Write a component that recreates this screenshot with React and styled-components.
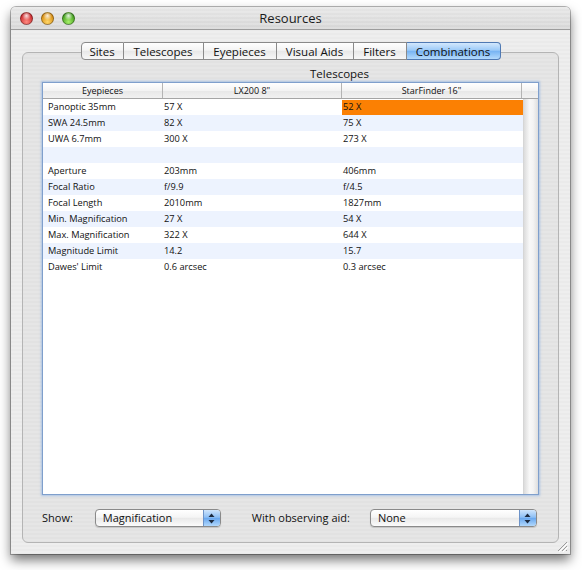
import React from 'react';
import styled, { createGlobalStyle } from 'styled-components';

const GlobalStyle = createGlobalStyle`
  body {
    margin: 0;
    background: #ffffff;
    font-family: "Open Sans", "Liberation Sans", sans-serif;
  }
`;

const Page = styled.div`
  padding: 7px 0 0 11px;
  width: 582px;
  height: 570px;
  box-sizing: border-box;
`;

const Window = styled.div`
  position: relative;
  width: 559px;
  height: 547px;
  display: flex;
  flex-direction: column;
  border-radius: 5px 5px 0 0;
  overflow: hidden;
  box-shadow: 0 0 0 1px rgba(0, 0, 0, 0.28), 0 6px 12px rgba(0, 0, 0, 0.55);
  background: repeating-linear-gradient(to bottom, #eeeeee 0, #eeeeee 2px, #eaeaea 2px, #eaeaea 4px);
`;

const TitleBar = styled.div`
  position: relative;
  height: 22px;
  flex: none;
  display: flex;
  align-items: center;
  padding-left: 9px;
  gap: 8px;
  border-bottom: 1px solid #9c9c9c;
  background:
    repeating-linear-gradient(to bottom, rgba(255, 255, 255, 0.18) 0, rgba(255, 255, 255, 0.18) 2px, transparent 2px, transparent 4px),
    linear-gradient(#e6e6e6, #d6d6d6);
`;

const Light = styled.div`
  width: 13px;
  height: 13px;
  border-radius: 50%;
  box-sizing: border-box;
  border: 1px solid rgba(0, 0, 0, 0.35);
  background:
    radial-gradient(circle at 50% 25%, rgba(255, 255, 255, 0.85) 0, rgba(255, 255, 255, 0) 45%),
    radial-gradient(circle at 50% 80%, ${p => p.$glow} 0, ${p => p.$color} 75%);
`;

const Title = styled.div`
  position: absolute;
  left: 0;
  right: 0;
  top: 0;
  line-height: 22px;
  text-align: center;
  font-size: 13px;
  color: #1a1a1a;
  pointer-events: none;
`;

const Body = styled.div`
  flex: 1;
  display: flex;
  flex-direction: column;
  padding: 12px 11px 11px 11px;
  min-height: 0;
`;

const TabRow = styled.div`
  position: relative;
  z-index: 1;
  display: flex;
  justify-content: center;
  margin-bottom: -8px;
`;

const Tab = styled.div`
  width: ${p => p.$w}px;
  height: 18px;
  box-sizing: border-box;
  display: flex;
  align-items: center;
  justify-content: center;
  font-size: 11.5px;
  color: #111;
  border: 1px solid ${p => (p.$active ? '#4f79b3' : '#8a8a8a')};
  border-left-width: ${p => (p.$first ? '1px' : '0')};
  border-radius: ${p => (p.$first ? '4px 0 0 4px' : p.$last ? '0 4px 4px 0' : '0')};
  background: ${p =>
    p.$active
      ? 'linear-gradient(#d3e8fd 0%, #9ccaf8 45%, #78b4f3 52%, #b4dafc 100%)'
      : 'linear-gradient(#ffffff 0%, #f4f4f4 45%, #e8e8e8 52%, #f7f7f7 100%)'};
`;

const GroupBox = styled.div`
  flex: 1;
  display: flex;
  flex-direction: column;
  border: 1px solid #b4b4b4;
  border-radius: 6px;
  background: rgba(0, 0, 0, 0.03);
  padding: 14px 19px 15px 19px;
  min-height: 0;
`;

const SectionLabel = styled.div`
  height: 14px;
  line-height: 14px;
  font-size: 11.5px;
  color: #111;
  padding-left: 268px;
  margin-bottom: 1px;
`;

const Table = styled.div`
  flex: 1;
  display: flex;
  flex-direction: column;
  background: #ffffff;
  border: 1px solid #7f9fcc;
  box-shadow: 0 0 2px 1px rgba(120, 165, 225, 0.55);
  min-height: 0;
`;

const COLS = '120px 179px 180px 1fr';

const HeaderRow = styled.div`
  display: grid;
  grid-template-columns: ${COLS};
  height: 15px;
  border-bottom: 1px solid #a5a5a5;
  background: linear-gradient(#ffffff 0%, #f3f3f3 50%, #e7e7e7 51%, #f1f1f1 100%);
`;

const HeaderCell = styled.div`
  border-right: 1px solid #b4b4b4;
  font-size: 9px;
  line-height: 15px;
  text-align: center;
  color: #111;
  &:last-child {
    border-right: none;
  }
`;

const TableBody = styled.div`
  flex: 1;
  display: flex;
  min-height: 0;
`;

const Rows = styled.div`
  width: 480px;
  display: flex;
  flex-direction: column;
`;

const Row = styled.div`
  display: grid;
  grid-template-columns: 120px 179px 181px;
  height: 16px;
  background: ${p => (p.$striped ? '#edf3fe' : '#ffffff')};
`;

const Cell = styled.div`
  font-size: 9.25px;
  color: #111;
  white-space: nowrap;
  padding-left: ${p => (p.$first ? '5px' : '1px')};
  background: ${p => (p.$selected ? '#fb8003' : 'transparent')};
  height: ${p => (p.$selected ? '15px' : '16px')};
  margin-top: ${p => (p.$selected ? '1px' : '0')};
  line-height: ${p => (p.$selected ? '14px' : '16px')};
`;

const ScrollTrack = styled.div`
  flex: 1;
  border-left: 1px solid #d6d6d6;
  background: linear-gradient(to right, #dcdcdc 0%, #f8f8f8 40%, #f4f4f4 65%, #dedede 100%);
`;

const Controls = styled.div`
  display: flex;
  align-items: center;
  margin-top: 14px;
  height: 18px;
`;

const ControlLabel = styled.div`
  font-size: 11px;
  color: #111;
  margin-left: ${p => p.$gap || 0}px;
  margin-right: ${p => p.$right}px;
  margin-top: -1px;
`;

const Popup = styled.div`
  width: ${p => p.$w}px;
  height: 18px;
  box-sizing: border-box;
  display: flex;
  border: 1px solid #8a8a8a;
  border-radius: 4px;
  overflow: hidden;
  background: linear-gradient(#ffffff 0%, #f5f5f5 45%, #e9e9e9 52%, #fbfbfb 100%);
  box-shadow: 0 1px 1px rgba(0, 0, 0, 0.15);
`;

const PopupText = styled.div`
  flex: 1;
  padding-left: 7px;
  font-size: 11px;
  line-height: 16px;
  color: #111;
`;

const PopupArrows = styled.div`
  width: 16px;
  display: flex;
  align-items: center;
  justify-content: center;
  border-left: 1px solid #6d93c8;
  background: linear-gradient(#cfe5fc 0%, #8fc0f5 45%, #6aa8ef 52%, #b1d8fc 100%);
`;

const Grip = styled.svg`
  position: absolute;
  right: 2px;
  bottom: 2px;
`;

const rows = [
  ['Panoptic 35mm', '57 X', '52 X'],
  ['SWA 24.5mm', '82 X', '75 X'],
  ['UWA 6.7mm', '300 X', '273 X'],
  ['', '', ''],
  ['Aperture', '203mm', '406mm'],
  ['Focal Ratio', 'f/9.9', 'f/4.5'],
  ['Focal Length', '2010mm', '1827mm'],
  ['Min. Magnification', '27 X', '54 X'],
  ['Max. Magnification', '322 X', '644 X'],
  ['Magnitude Limit', '14.2', '15.7'],
  ["Dawes' Limit", '0.6 arcsec', '0.3 arcsec'],
];

const tabs = [
  ['Sites', 43],
  ['Telescopes', 80],
  ['Eyepieces', 73],
  ['Visual Aids', 77],
  ['Filters', 53],
  ['Combinations', 94],
];

const Arrows = () => (
  <svg width="7" height="11" viewBox="0 0 7 11">
    <path d="M3.5 0.5 L6.5 4 L0.5 4 Z" fill="#1d2b40" />
    <path d="M3.5 10.5 L6.5 7 L0.5 7 Z" fill="#1d2b40" />
  </svg>
);

const SelectBox = ({ width, value }) => (
  <Popup $w={width}>
    <PopupText>{value}</PopupText>
    <PopupArrows>
      <Arrows />
    </PopupArrows>
  </Popup>
);

const App = () => (
  <Page>
    <GlobalStyle />
    <Window>
      <TitleBar>
        <Light $color="#c9262a" $glow="#ff8a80" />
        <Light $color="#d68a0c" $glow="#ffd76a" />
        <Light $color="#3d9a1b" $glow="#a8f06a" />
        <Title>Resources</Title>
      </TitleBar>
      <Body>
        <TabRow>
          {tabs.map(([label, w], i) => (
            <Tab
              key={label}
              $w={w}
              $first={i === 0}
              $last={i === tabs.length - 1}
              $active={label === 'Combinations'}
            >
              {label}
            </Tab>
          ))}
        </TabRow>
        <GroupBox>
          <SectionLabel>Telescopes</SectionLabel>
          <Table>
            <HeaderRow>
              <HeaderCell>Eyepieces</HeaderCell>
              <HeaderCell>LX200 8"</HeaderCell>
              <HeaderCell>StarFinder 16"</HeaderCell>
              <HeaderCell />
            </HeaderRow>
            <TableBody>
              <Rows>
                {rows.map((r, i) => (
                  <Row key={i} $striped={i % 2 === 1}>
                    <Cell $first>{r[0]}</Cell>
                    <Cell>{r[1]}</Cell>
                    <Cell $selected={i === 0}>{r[2]}</Cell>
                  </Row>
                ))}
              </Rows>
              <ScrollTrack />
            </TableBody>
          </Table>
          <Controls>
            <ControlLabel $right={22}>Show:</ControlLabel>
            <SelectBox width={126} value="Magnification" />
            <ControlLabel $gap={31} $right={20}>With observing aid:</ControlLabel>
            <SelectBox width={167} value="None" />
          </Controls>
        </GroupBox>
      </Body>
      <Grip width="12" height="12" viewBox="0 0 12 12">
        <path d="M11 2 L2 11 M11 6 L6 11 M11 10 L10 11" stroke="#9a9a9a" strokeWidth="1" />
        <path d="M12 3 L3 12 M12 7 L7 12" stroke="#ffffff" strokeWidth="1" />
      </Grip>
    </Window>
  </Page>
);

export default App;
